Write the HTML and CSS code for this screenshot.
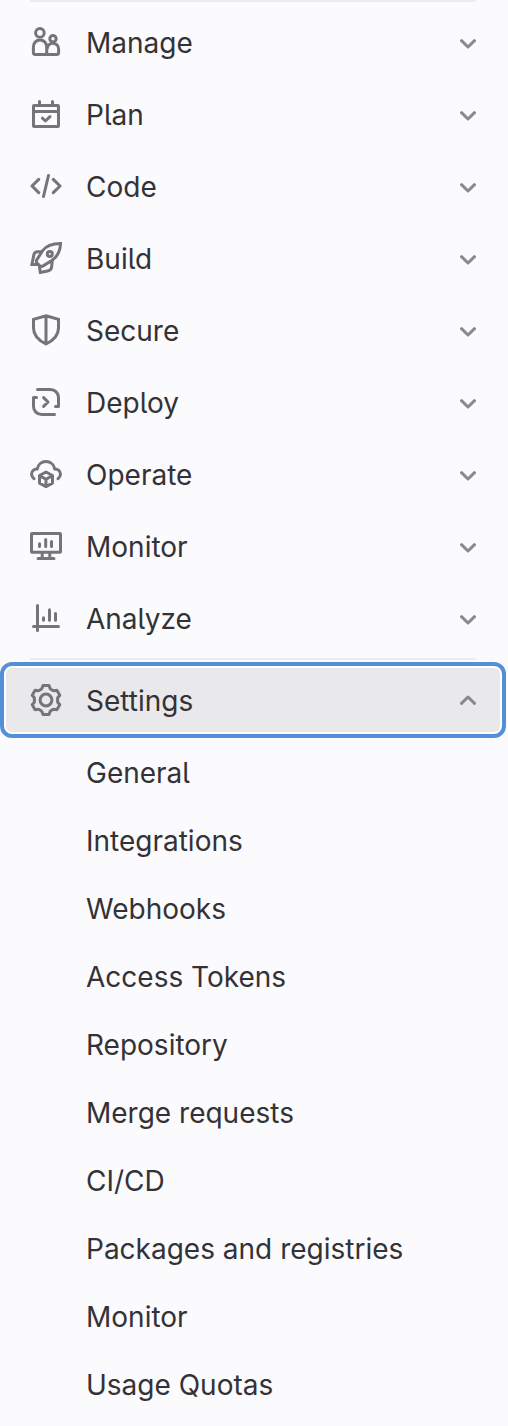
FILE: index.html
```html
<!DOCTYPE html>
<html lang="en">
<head>
<meta charset="utf-8">
<title>Project navigation</title>
<link rel="stylesheet" href="styles.css">
</head>
<body>
<svg class="defs" aria-hidden="true">
  <symbol id="chevron" viewBox="0 0 16 10"><path d="M1.500 1.700 8 8l6.500-6.300"/></symbol>
</svg>
<nav class="sidebar">
  <ul class="menu">
    <li class="item"><svg class="icon" viewBox="0 0 32 32"><circle cx="9.900" cy="6.900" r="4.300"/><circle cx="23" cy="12.700" r="3.200"/><path d="M16.700 28.600H5.400a2 2 0 0 1-2-2v-6a6.600 6.600 0 0 1 13.300 0zM16.700 28.600h9.900a2 2 0 0 0 2-2v-3.400a5.700 5.700 0 0 0-11.400-.6"/></svg><span class="label">Manage</span><svg class="chevron"><use href="#chevron"/></svg></li>
    <li class="item"><svg class="icon" viewBox="0 0 32 32"><rect x="3.500" y="7.500" width="25" height="21" rx=".6"/><path d="M3.500 13.400h25M9.500 3.500v4M22.500 3.500v4M12.400 20.200l3 2.800 4.600-4.300"/></svg><span class="label">Plan</span><svg class="chevron"><use href="#chevron"/></svg></li>
    <li class="item"><svg class="icon" viewBox="0 0 32 32"><path d="M8.700 9.400 2 16l6.700 6.600M18.500 5.500l-5 21M23.300 9.400 30 16l-6.700 6.600"/></svg><span class="label">Code</span><svg class="chevron"><use href="#chevron"/></svg></li>
    <li class="item"><svg class="icon sharp" viewBox="0 0 32 32"><path d="M30.500 1.500C22 1.600 16.300 3.600 12.600 8.700L6.900 17.600c-1 1.600-.8 2.600.4 3.800l2.300 2.200c1.100 1 2.100 1.100 3.600.3l8.600-5.300C27.500 14.600 30.300 9 30.500 1.500zM12.200 9.700H7.600c-2 0-3.300.8-3.700 2.800L1.900 22.500l6-.3M9.300 23.600l1 6.900 7.300-1.500c2.400-.5 3.700-1.600 4-3.900l.7-6.400"/><circle cx="19.800" cy="11.900" r="2.500"/></svg><span class="label">Build</span><svg class="chevron"><use href="#chevron"/></svg></li>
    <li class="item"><svg class="icon sharp" viewBox="0 0 32 32"><path d="M16 1.800 28.500 5.400V14c0 6.500-4.200 12-12.500 16C7.700 26 3.500 20.500 3.500 14V5.400zM16 2v28"/></svg><span class="label">Secure</span><svg class="chevron"><use href="#chevron"/></svg></li>
    <li class="item"><svg class="icon" viewBox="0 0 32 32"><path d="M7.500 3.500h13a8 8 0 0 1 8 8v9h-3M6.500 11.500h-3v9a8 8 0 0 0 8 8h13M13.600 11.600 18 16l-4.400 4.400"/></svg><span class="label">Deploy</span><svg class="chevron"><use href="#chevron"/></svg></li>
    <li class="item"><svg class="icon" viewBox="0 0 32 32"><path d="M4 20.700A6 6 0 0 1 1.500 16.200a5.200 5.200 0 0 1 5.700-5.100C8.100 6.400 11.600 3.500 16 3.500s7.900 2.900 8.800 7.600a5.200 5.200 0 0 1 5.700 5.100A6 6 0 0 1 28 20.700M16 14l6.500 3.500v7.600L16 28.600l-6.500-3.500v-7.600zM10 17.900l6 3.300 6-3.300M16 21.200v7"/></svg><span class="label">Operate</span><svg class="chevron"><use href="#chevron"/></svg></li>
    <li class="item"><svg class="icon" viewBox="0 0 32 32"><rect x="1.500" y="3.500" width="29" height="18.800" rx=".6"/><path d="M8 28.500h16M12.200 22.500v6M19.800 22.500v6M9.500 13.700v2.800M15.700 9.500v7M21.500 11.500v5"/></svg><span class="label">Monitor</span><svg class="chevron"><use href="#chevron"/></svg></li>
    <li class="item"><svg class="icon" viewBox="0 0 32 32"><path d="M7.500 3.500v25M3.500 24.500h25M13.500 15.800v2.500M19.500 7.700v10.600M25.500 11.500v6.800"/></svg><span class="label">Analyze</span><svg class="chevron"><use href="#chevron"/></svg></li>
  </ul>
  <section class="settings">
    <button class="item toggle" type="button"><svg class="icon" viewBox="0 0 32 32"><circle cx="16" cy="16" r="5.900"/><path d="M13 1.500h6l1.100 3q.2.500.7.800l2.100 1.200q.5.300 1 .2l3-.5 2.900 5-1.900 2.300q-.3.400-.3.900v3.200q0 .5.300.9l1.900 2.300-2.900 5-3-.5q-.5-.1-1 .2l-2.100 1.200q-.5.300-.7.800l-1.100 3h-6l-1.100-3q-.2-.5-.7-.8l-2.100-1.200q-.5-.3-1-.2l-3 .5-2.900-5 1.900-2.300q.3-.4.300-.9v-3.200q0-.5-.3-.9l-1.900-2.300 2.900-5 3 .5q.5.100 1-.2l2.100-1.200q.5-.3.700-.8z"/></svg><span class="label">Settings</span><svg class="chevron up"><use href="#chevron"/></svg></button>
    <ul class="submenu">
      <li>General</li>
      <li>Integrations</li>
      <li>Webhooks</li>
      <li>Access Tokens</li>
      <li>Repository</li>
      <li>Merge requests</li>
      <li>CI/CD</li>
      <li>Packages and registries</li>
      <li>Monitor</li>
      <li>Usage Quotas</li>
    </ul>
  </section>
</nav>
</body>
</html>
```
FILE: styles.css
```css
* { box-sizing: border-box; }
body {
  margin: 0;
  background: #fbfafd;
  color: #333236;
  font: 28px/32px Inter, "Liberation Sans", sans-serif;
  font-feature-settings: "cv05";
}
.defs { display: block; width: 0; height: 0; }
.sidebar { height: 1426px; overflow: hidden; }
ul { margin: 0; padding: 0; list-style: none; }
.menu::before,
.settings::before {
  content: "";
  display: block;
  height: 2px;
  margin: 0 32px 0 30px;
  background: #ececef;
}
.menu::before { margin-bottom: 4px; }
.item {
  display: flex;
  align-items: center;
  height: 72px;
  padding: 0 32px 0 30px;
}
.icon {
  width: 32px;
  height: 32px;
  flex: none;
  fill: none;
  stroke: #757478;
  stroke-width: 3;
  stroke-linecap: round;
  stroke-linejoin: round;
}
.sharp { stroke-linejoin: miter; stroke-linecap: butt; }
.label { flex: 1; margin-left: 24px; padding-top: 2px; text-align: left; }
.chevron {
  width: 16px;
  height: 10px;
  margin-top: 3px;
  fill: none;
  stroke: #89888d;
  stroke-width: 3;
  stroke-linecap: round;
  stroke-linejoin: round;
}
.up { transform: scaleY(-1); margin-top: 0; }
.settings { padding-top: 4px; }
.toggle {
  width: 506px;
  height: 76px;
  margin-top: 2px;
  padding: 0 26px;
  border: 4px solid #5490d9;
  border-radius: 12px;
  background: #e9e9eb;
  box-shadow: inset 0 0 0 2px #fff;
  color: inherit;
  font: inherit;
  font-feature-settings: inherit;
}
.submenu li {
  height: 68px;
  padding: 19px 0 0 86px;
}
```
